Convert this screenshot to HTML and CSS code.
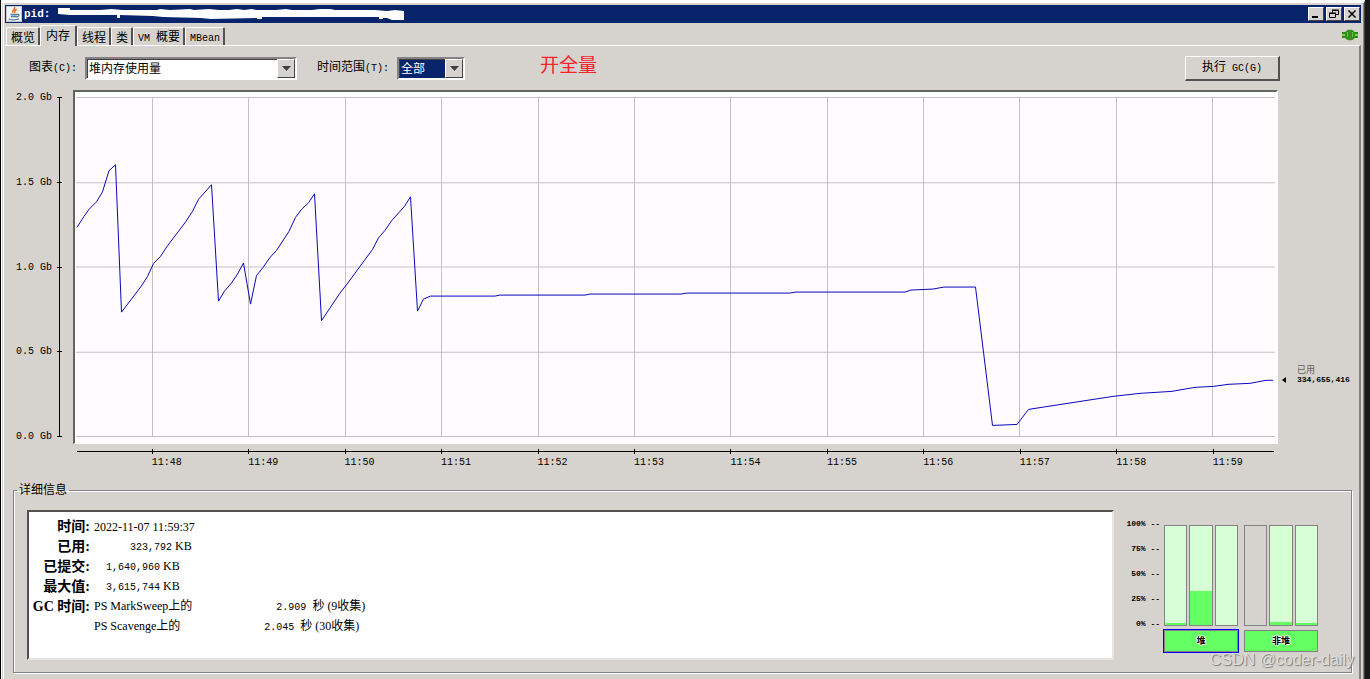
FILE: index.html
```html
<!DOCTYPE html>
<html lang="zh-CN">
<head>
<meta charset="utf-8">
<title>内存</title>
<link rel="stylesheet" href="styles.css">
</head>
<body>
<main class="window">
  <header class="titlebar">
    <svg class="app-icon" width="16" height="16" viewBox="0 0 16 16">
      <rect width="16" height="16" fill="#c4c8d2"/><rect x="1" y="1" width="14" height="14" fill="#f2f3f5"/>
      <path d="M8.500 1c1.500 2-3 2.800-1.500 5.800M10.800 3.200c-2.300 1.200-2.500 2-1.600 3.700" fill="none" stroke="#e8762c" stroke-width="1.600"/>
      <path d="M4.500 8.500h6.500M5 10.500h5.500M11 8.500c3-1 2.500 2-.5 2.500M2.500 13c3 1.300 8 1.200 10.500-.2" fill="none" stroke="#54809c" stroke-width="1.300"/>
    </svg>
    <h1 class="title">pid:</h1>
    <svg class="mask" width="346" height="13" viewBox="58 9 346 13"><path d="M58 9h12v2h30l12-1 10 1h35l3-1 10 1 20-1 4 1 15-1 10 1h10l8-1 7 1 8-1 4 1h20l10-1 6 1h20l8-1h10l5 1h40l12 1 8-1 9 1v9h-12l-5-2h-4v1h-4v-2H262v2h-5v-1l-46 1-10-1-38-1-10-1-33-1v3h-3v-3H70l-12-1z" fill="#fff"/></svg>
    <div class="window-buttons">
      <button class="wbtn" aria-label="最小化"><svg width="12" height="10"><path d="M2 8h6" stroke="#000" stroke-width="2"/></svg></button>
      <button class="wbtn" aria-label="还原"><svg width="12" height="10"><path d="M4.500 4V1.500h6v4H8M4 1h7M1.500 4.500h6v4h-6zM1 4h7" fill="none" stroke="#000"/></svg></button>
      <button class="wbtn" aria-label="关闭"><svg width="12" height="10"><path d="M2.500 1.500l7 7M9.500 1.500l-7 7" stroke="#000" stroke-width="1.500"/></svg></button>
    </div>
  </header>

  <nav class="tabs">
    <button class="tab">概览</button>
    <button class="tab tab-active">内存</button>
    <button class="tab">线程</button>
    <button class="tab">类</button>
    <button class="tab"><span class="mono">VM </span>概要</button>
    <button class="tab"><span class="mono">MBean</span></button>
    <svg class="link-icon" width="16" height="12" viewBox="0 0 16 12">
      <path d="M0 3h4v6H0zM12 3h4v6h-4z" fill="#2f8a1a"/><path d="M0 5h16v2H0z" fill="#8aca62"/>
      <path d="M7.500 0.500C4 1 3 3 3 6s1 5 4.500 5.500zM8.500 0.500C12 1 13 3 13 6s-1 5-4.500 5.500z" fill="#2c9416"/>
      <path d="M5.500 3v5M10.500 3v5" stroke="#6cc742"/><path d="M8 1v10" stroke="#155e08"/>
    </svg>
  </nav>

  <section class="panel">
    <div class="toolbar">
      <label for="chart">图表<span class="mono">(C):</span></label>
      <span class="combo combo-chart">
        <select id="chart"><option>堆内存使用量</option></select>
        <span class="arrow"><svg width="9" height="5"><path d="M0 0h9L4.500 5z" fill="#424142"/></svg></span>
      </span>
      <label for="range" class="range-label">时间范围<span class="mono">(T):</span></label>
      <span class="combo combo-range">
        <select id="range"><option>全部</option></select>
        <span class="arrow"><svg width="9" height="5"><path d="M0 0h9L4.500 5z" fill="#424142"/></svg></span>
      </span>
      <strong class="note">开全量</strong>
      <button class="gc">执行<span class="mono"> GC(G)</span></button>
    </div>

    <div class="chart">
      <div class="y-axis mono"><span>2.0 Gb</span><span>1.5 Gb</span><span>1.0 Gb</span><span>0.5 Gb</span><span>0.0 Gb</span></div>
      <div class="plot">
        <svg class="plot-svg" viewBox="75 93 1201 350" preserveAspectRatio="none">
          <rect x="76" y="98" width="1199" height="345" fill="#fffbff"/>
          <path class="grid" d="M76 98.500H1275M76 183.500H1275M76 267.500H1275M76 352.500H1275M76 436.500H1275M152.500 98V437M248.500 98V437M345.500 98V437M441.500 98V437M538.500 98V437M634.500 98V437M730.500 98V437M827.500 98V437M923.500 98V437M1019.500 98V437M1116.500 98V437M1212.500 98V437"/>
          <polyline class="line" points="77,228 84,217 89,210 96.500,202.500 102.500,192.500 109,171.500 115.500,165.500 121.500,312.500 141,287 147.500,277 153.500,264 160.500,257 167,247 186,222 192.500,212 198.500,200 211.500,185.500 218.500,301.500 224.500,291.500 231.500,283.500 237.500,274.500 243.500,263.500 250.500,304.500 256.500,276 263,268 270,258 276.500,251 289,232 295.500,218 301.500,210 308.500,203.500 314.500,194.500 321.500,321 340,293.500 347,284.500 372.500,250 378.500,238.500 385,231 391.500,221.500 404.500,207 410.500,197.500 417.500,311.500 423.500,299.500 430.500,296.500 495,296.500 500,295.500 585,295.500 590,294.500 681,294.500 687,293.500 790,293.500 796,292.500 905,292.500 911,290.500 933,289.500 944,287.500 975.500,287.500 992.500,425.500 1017,424.500 1028.500,409.500 1113,396.500 1140,393.500 1172,391.500 1195,387.500 1214,386.500 1228,384.500 1250,383.500 1266,380.500 1273,380.500"/>
        </svg>
      </div>
      <div class="current">
        <svg class="pointer" width="4" height="6"><path d="M4 0v6L0 3z"/></svg>
        <p class="current-text"><span class="current-name">已用</span><span class="current-value">334,655,416</span></p>
      </div>
      <div class="x-axis mono"><span>11:48</span><span>11:49</span><span>11:50</span><span>11:51</span><span>11:52</span><span>11:53</span><span>11:54</span><span>11:55</span><span>11:56</span><span>11:57</span><span>11:58</span><span>11:59</span></div>
    </div>

    <fieldset class="details">
      <legend>详细信息</legend>
      <div class="details-body">
        <div class="info">
          <table>
            <tr><th>时间:</th><td>2022-11-07 11:59:37</td></tr>
            <tr><th>已用:</th><td><span class="mono">      323,792</span> KB</td></tr>
            <tr><th>已提交:</th><td><span class="mono">  1,640,960</span> KB</td></tr>
            <tr><th>最大值:</th><td><span class="mono">  3,615,744</span> KB</td></tr>
            <tr><th>GC 时间:</th><td>PS MarkSweep上的<span class="mono">              2.909 </span>秒 (9收集)</td></tr>
            <tr><th></th><td>PS Scavenge上的<span class="mono">              2.045 </span>秒 (30收集)</td></tr>
          </table>
        </div>
        <div class="scale"><span>100% --</span><span>75% --</span><span>50% --</span><span>25% --</span><span>0% --</span></div>
        <div class="pools">
          <div class="bars">
            <div class="bar"><i style="height:2%"></i></div>
            <div class="bar"><i style="height:34%"></i></div>
            <div class="bar"></div>
          </div>
          <button class="pool pool-active">堆</button>
        </div>
        <div class="pools">
          <div class="bars">
            <div class="bar bar-empty"></div>
            <div class="bar"><i style="height:3%"></i></div>
            <div class="bar"><i style="height:2%"></i></div>
          </div>
          <button class="pool">非堆</button>
        </div>
      </div>
    </fieldset>
  </section>
  <div class="watermark">CSDN @coder-daily</div>
</main>
</body>
</html>
```
FILE: styles.css
```css
* { box-sizing: border-box; }
body {
  margin: 0;
  padding: 0 5px 0 1px;
  background: linear-gradient(90deg, #000 1px, #181818 1px);
  color: #000;
  font: 12px/14px "Liberation Serif", "Noto Sans CJK SC", serif;
}
button, select { font: inherit; color: inherit; margin: 0; padding: 0; border-radius: 0; }
.mono { font-family: "Liberation Mono", monospace; font-size: 10px; white-space: pre; }

.window {
  position: relative;
  min-height: 100vh;
  display: flex;
  flex-direction: column;
  padding: 2px 3px 0;
  background: #d6d3ce;
  border: solid #fff;
  border-width: 3px 0 0 1px;
  border-right: 1px solid #424142;
  box-shadow: inset -1px 0 #848284, inset 1px 0 #d6d3ce, inset 2px 0 #fff;
}

.titlebar {
  display: flex;
  align-items: center;
  height: 18px;
  padding: 0 1px;
  background: #08246b;
  color: #fff;
}
.title { margin: 0 8px 0 2px; font: bold 11px/16px "Liberation Mono", monospace; }
.window-buttons { display: flex; gap: 2px; margin-left: auto; }
.wbtn {
  display: grid;
  place-items: center;
  width: 16px;
  height: 14px;
  background: #d6d3ce;
  border: 1px solid;
  border-color: #fff #424142 #424142 #fff;
}

.tabs { display: flex; align-items: flex-end; height: 22px; padding-left: 1px; }
.tab {
  height: 18px;
  padding: 2px 3px 0 4px;
  background: #d6d3ce;
  border: solid;
  border-width: 1px 2px 0 1px;
  border-color: #fff #525152 #fff #fff;
  border-radius: 2px 2px 0 0;
  white-space: nowrap;
}
.tab-active {
  position: relative;
  height: 21px;
  margin-bottom: -1px;
  padding: 0 5px 1px;
}
.link-icon { margin: 0 3px 4px auto; }

.panel {
  flex: 1;
  display: flex;
  flex-direction: column;
  border-top: 1px solid #fff;
  border-right: 2px solid #848284;
  padding-bottom: 6px;
}
.toolbar { display: flex; align-items: center; height: 44px; padding: 0 79px 0 24px; white-space: nowrap; }
.combo {
  display: flex;
  height: 23px;
  margin-left: 8px;
  border: 2px solid;
  border-color: #848284 #fff #fff #848284;
  background: #fff;
}
.combo select { flex: 1; appearance: none; border: 1px solid #424142; border-right: 0; border-bottom: 0; background: #fff; padding: 0 1px; outline: 0; }
.combo-chart { width: 212px; }
.combo-range { width: 68px; }
.combo-range select { background: #08246b; color: #fff; }
.arrow {
  display: grid;
  place-items: center;
  width: 18px;
  background: #d6d3ce;
  border: 1px solid;
  border-color: #fff #424142 #424142 #fff;
  pointer-events: none;
}
.range-label { margin-left: 20px; }
.note { margin-left: 75px; padding-bottom: 4px; color: #f7202b; font-size: 19px; line-height: 24px; font-weight: 400; }
.gc {
  width: 95px;
  height: 25px;
  margin-left: auto;
  background: #d6d3ce;
  border: solid;
  border-width: 1px 2px 2px 1px;
  border-color: #fff #525152 #525152 #fff;
}

.chart {
  flex: 1;
  display: grid;
  grid-template: minmax(200px, 1fr) 32px / 68px minmax(0, 1fr) 81px;
}
.y-axis {
  display: flex;
  flex-direction: column;
  justify-content: space-between;
  margin: 1px 11px 1px 0;
  padding-left: 11px;
  background: linear-gradient(#000, #000) 54px 6px / 1px calc(100% - 12px) no-repeat;
}
.y-axis span { display: flex; justify-content: space-between; align-items: center; line-height: 13px; }
.y-axis span::after { content: ""; width: 5px; height: 1px; background: #000; }
.plot { position: relative; border: solid; border-width: 2px 2px 1px 2px; border-color: #63655f #fff #fff #63655f; background: #fff; }
.plot-svg { position: absolute; width: 100%; height: 100%; display: block; }
.grid { fill: none; stroke: #c4c1c4; shape-rendering: crispEdges; vector-effect: non-scaling-stroke; }
.line { fill: none; stroke: #0808bd; vector-effect: non-scaling-stroke; }
.current { display: flex; align-items: flex-start; gap: 11px; padding-left: 4px; align-self: end; height: 80px; }
.pointer { margin-top: 13px; }
.current-text { display: grid; margin: 0; padding-top: 1px; }
.current-name { color: #63615f; font-size: 9px; line-height: 10px; }
.current-value { font: bold 8px/10px "Liberation Mono", monospace; }
.x-axis {
  grid-column: 2;
  display: grid;
  grid-template-columns: repeat(11, minmax(0, 96fr)) minmax(0, 61fr);
  align-content: start;
  margin: 5px 4px 0;
  padding-left: 6.2%;
  background: linear-gradient(#000, #000) 0 2px / 100% 1px no-repeat;
}
.x-axis span { padding-top: 7px; background: linear-gradient(#000, #000) 0 0 / 1px 5px no-repeat; }

.details {
  margin: 7px 7px 0 8px;
  min-width: 0;
  padding: 13px 33px 12px 13px;
  border: 1px solid #848284;
  box-shadow: 1px 1px #fff, inset 1px 1px #fff;
}
.details legend { margin-left: -10px; padding: 0 2px; line-height: 14px; }
.details-body { display: flex; }
.info {
  flex: 1;
  height: 150px;
  padding: 5px 3px;
  background: #fff;
  border: 2px solid;
  border-color: #525152 #e7e5e2 #e7e5e2 #525152;
}
.info table { border-collapse: collapse; }
.info th, .info td { height: 20px; padding: 0; white-space: nowrap; }
.info th { width: 58px; padding-right: 4px; box-sizing: content-box; text-align: right; font-size: 14px; line-height: 18px; }
.scale {
  display: flex;
  flex-direction: column;
  justify-content: space-between;
  align-items: flex-end;
  width: 46px;
  height: 110px;
  margin: 9px 4px 0 0;
  font: bold 8px/10px "Liberation Mono", monospace;
  white-space: pre;
}
.pools { width: 74px; margin: 15px 6px 0 0; }
.pools:last-child { margin-right: 0; }
.bars { display: flex; gap: 2px; height: 101px; }
.bar { flex: 1; display: flex; align-items: flex-end; background: #d6ffd6; border: 1px solid #848284; }
.bar i { width: 100%; background: #63ff63; }
.bar-empty { background: #d6d3ce; }
.pool {
  display: block;
  width: 100%;
  height: 22px;
  margin-top: 4px;
  background: #63ff63;
  border: 1px solid #848284;
  font-size: 9px;
  line-height: 12px;
  font-weight: 700;
  text-shadow: 1px 0 #fff, -1px 0 #fff, 0 1px #fff, 0 -1px #fff;
}
.pool-active { box-shadow: 0 0 0 1px #0000f0; }
.watermark {
  position: absolute;
  right: 10px;
  bottom: 9px;
  font: 16px/20px "Liberation Sans", sans-serif;
  color: #dedddb;
  text-shadow: 1px 1px 1px #777;
  pointer-events: none;
}
```
